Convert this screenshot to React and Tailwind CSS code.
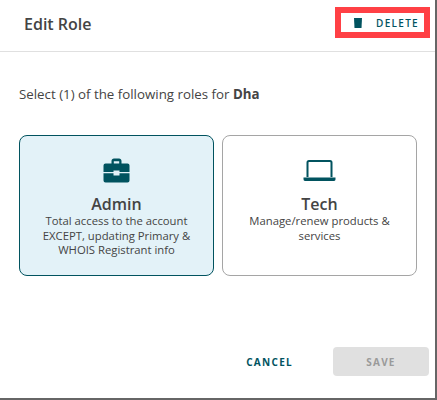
import React from "react";

const BriefcaseIcon = () => (
  <svg width="27" height="25" viewBox="0 0 27 25" className="block">
    <path d="M8.500 6V3C8.500 1.500 9.500.5 11 .5h5c1.500 0 2.500 1 2.500 2.500v3h-2.300V3.200h-5.400V6z" fill="#01535f" />
    <path d="M2.500 5.500h22a2 2 0 0 1 2 2v6.500H16.500v-1.500h-6V14H.5V7.500a2 2 0 0 1 2-2z" fill="#01535f" />
    <path d="M.5 15.200h10V17.500h6v-2.300h10v7.300a2 2 0 0 1-2 2h-22a2 2 0 0 1-2-2z" fill="#01535f" />
    <rect x="11.500" y="13.500" width="4" height="3" fill="#e3f2f8" />
  </svg>
);

const LaptopIcon = () => (
  <svg width="33" height="22" viewBox="0 0 33 22" className="block">
    <path d="M4.500 17V2.500C4.500 1.500 5 1 6 1h21c1 0 1.500.5 1.500 1.500V17" fill="none" stroke="#01535f" strokeWidth="2" />
    <path d="M.5 17.500h32v1.500c0 1-.5 2-1.500 2H2c-1 0-1.500-1-1.500-2z" fill="#01535f" />
  </svg>
);

const RoleCard = ({ icon, title, desc, selected }) => (
  <div
    className={`w-[195px] h-[141px] rounded-lg border flex flex-col items-center text-center ${
      selected ? "border-[#01535f] bg-[#e3f2f8]" : "border-[#a5a5a5] bg-white"
    }`}
  >
    <div className="h-[25px] mt-[22px] flex items-center justify-center">{icon}</div>
    <div className="text-[16px] leading-[22px] mt-[10px] text-[#444444] font-semibold">{title}</div>
    <div className="text-[11.300px] leading-[14.500px] text-[#444444] px-3 mt-[-1px]">{desc}</div>
  </div>
);

const App = () => {
  return (
    <div className="w-[437px] h-[400px] bg-[#666666] overflow-hidden font-['Open_Sans',sans-serif]">
      <div className="w-[435px] h-[398px] bg-white flex flex-col">
        <div className="h-[52px] border-b border-[#e0e0e0] flex items-start justify-between pl-6 pr-[5px] pt-[7px] shrink-0">
          <div className="text-[16px] leading-[20px] mt-[7px] font-semibold text-[#444444]">Edit Role</div>
          <div className="w-[95px] h-[31px] border-[6px] border-[#ff4045] flex items-center pl-[13px]">
            <svg width="8" height="10" viewBox="0 0 8 10" className="block">
              <path d="M0 0h8L7.500 10H.5z" fill="#01535f" />
            </svg>
            <span className="ml-[14px] text-[10px] leading-none font-semibold tracking-[1.300px] text-[#01535f]">DELETE</span>
          </div>
        </div>
        <div className="text-[13.300px] leading-[16px] text-[#444444] pl-[19px] mt-[34px]">
          Select (1) of the following roles for <span className="font-bold">Dha</span>
        </div>
        <div className="flex gap-2 pl-[19px] mt-[33px]">
          <RoleCard
            selected
            icon={<BriefcaseIcon />}
            title="Admin"
            desc={<>Total access to the account EXCEPT, updating Primary &amp; WHOIS Registrant info</>}
          />
          <RoleCard
            icon={<LaptopIcon />}
            title="Tech"
            desc={<>Manage/renew products &amp; services</>}
          />
        </div>
        <div className="flex items-center justify-end mt-[71px] pr-[6px]">
          <button className="text-[10px] font-bold tracking-[1.300px] text-[#01535f] mr-[40px] mt-px">CANCEL</button>
          <button className="w-[96px] h-[29px] rounded bg-[#e0e0e0] text-[10px] font-bold tracking-[1.200px] text-[#9a9a9a] pt-px">SAVE</button>
        </div>
      </div>
    </div>
  );
};

export default App;
